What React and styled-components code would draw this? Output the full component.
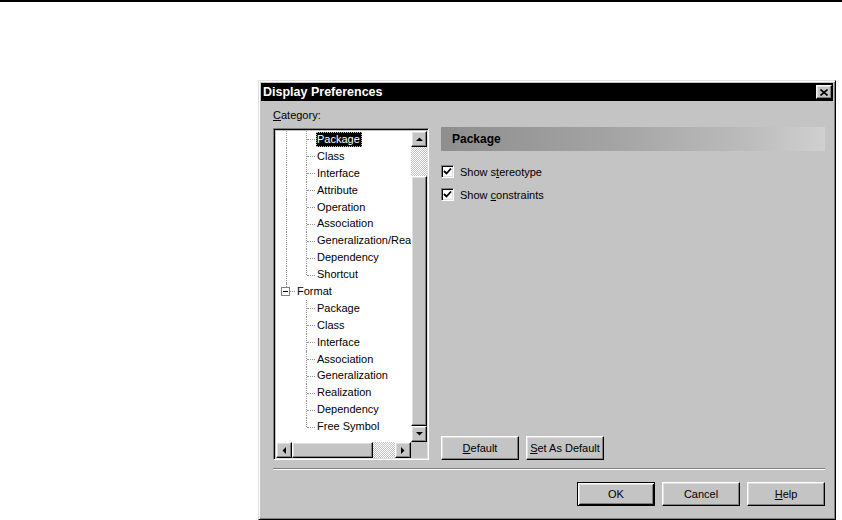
import React from 'react';
import styled, { css, createGlobalStyle } from 'styled-components';

const GlobalStyle = createGlobalStyle`
  html, body {
    margin: 0;
    padding: 0;
    background: #fff;
  }
  body {
    font-family: "Liberation Sans", Arial, sans-serif;
    font-size: 11px;
    color: #000;
  }
`;

const FACE = '#c4c4c4';

const raised = css`
  border: 1px solid;
  border-color: #fff #000 #000 #fff;
  box-shadow: inset -1px -1px #808080, inset 1px 1px #dfdfdf;
`;

const sunken = css`
  border: 1px solid;
  border-color: #808080 #fff #fff #808080;
  box-shadow: inset 1px 1px #000, inset -1px -1px #dfdfdf;
`;

const dither = css`
  background-color: #e4e4e4;
  background-image: repeating-conic-gradient(#c4c4c4 0 25%, #fff 0 50%);
  background-size: 2px 2px;
`;

const TopRule = styled.div`
  height: 2px;
  background: #000;
`;

const Dialog = styled.div`
  box-sizing: border-box;
  width: 578px;
  height: 440px;
  margin: 78px 0 0 258px;
  padding: 2px;
  background: ${FACE};
  border: 1px solid;
  border-color: #dfdfdf #000 #000 #dfdfdf;
  box-shadow: inset 1px 1px #fff, inset -1px -1px #808080;
  display: flex;
  flex-direction: column;
`;

const TitleBar = styled.div`
  height: 18px;
  background: #000;
  color: #fff;
  display: flex;
  align-items: center;
  justify-content: space-between;
  padding-left: 2px;
  font-size: 12.5px;
  font-weight: bold;
`;

const CloseButton = styled.button`
  box-sizing: border-box;
  width: 16px;
  height: 14px;
  margin-right: 1px;
  padding: 0;
  background: ${FACE};
  ${raised};
  display: flex;
  align-items: center;
  justify-content: center;
`;

const Body = styled.div`
  flex: 1;
  padding: 8px 8px 0 12px;
  display: flex;
  flex-direction: column;
`;

const MainRow = styled.div`
  display: flex;
  align-items: stretch;
`;

const LeftColumn = styled.div`
  width: 156px;
  display: flex;
  flex-direction: column;
`;

const FieldLabel = styled.div`
  line-height: 13px;
  height: 13px;
  margin-bottom: 6px;
`;

const TreeBox = styled.div`
  box-sizing: border-box;
  height: 332px;
  ${sunken};
  padding: 2px 1px 1px 2px;
  display: grid;
  grid-template-columns: 1fr 16px;
  grid-template-rows: 1fr 16px;
`;

const TreeContent = styled.div`
  background: #fff;
  overflow: hidden;
  white-space: nowrap;
`;

const TreeRow = styled.div`
  display: flex;
  align-items: center;
  height: 16.9px;
`;

const Gutter = styled.span`
  position: relative;
  flex: 0 0 20px;
  align-self: stretch;
  &::before {
    content: '';
    display: ${(p) => (p.$vert === 'none' ? 'none' : 'block')};
    position: absolute;
    left: 10px;
    top: 0;
    height: ${(p) => (p.$vert === 'top' ? '50%' : '100%')};
    border-left: 1px dotted #969696;
  }
  &::after {
    content: '';
    display: ${(p) => (p.$stub ? 'block' : 'none')};
    position: absolute;
    left: 11px;
    right: 1px;
    top: 50%;
    border-top: 1px dotted #969696;
  }
`;

const ExpandBox = styled.span`
  position: absolute;
  z-index: 1;
  left: 5px;
  top: 4px;
  width: 9px;
  height: 9px;
  box-sizing: border-box;
  border: 1px solid #808080;
  background: #fff;
  &::after {
    content: '';
    position: absolute;
    left: 1px;
    top: 3px;
    width: 5px;
    height: 1px;
    background: #000;
  }
`;

const NodeLabel = styled.span`
  padding: 0 2px 0 1px;
  height: 15px;
  line-height: 15px;
  ${(p) =>
    p.$selected &&
    css`
      background: #000;
      color: #fff;
      outline: 1px dotted #bbb;
      outline-offset: -1px;
    `}
`;

const VScroll = styled.div`
  display: flex;
  flex-direction: column;
  ${dither};
`;

const HScroll = styled.div`
  display: flex;
  ${dither};
`;

const ScrollButton = styled.div`
  box-sizing: border-box;
  flex: 0 0 16px;
  width: 16px;
  height: 16px;
  background: ${FACE};
  ${raised};
  display: flex;
  align-items: center;
  justify-content: center;
`;

const Thumb = styled.div`
  box-sizing: border-box;
  background: ${FACE};
  ${raised};
  ${(p) =>
    p.$horizontal
      ? css`
          width: ${p.$size}px;
          height: 16px;
        `
      : css`
          height: ${p.$size}px;
          width: 16px;
        `}
`;

const Track = styled.div`
  ${(p) => (p.$horizontal ? 'width' : 'height')}: ${(p) => p.$size}px;
  flex: ${(p) => (p.$grow ? 1 : 'none')};
`;

const Corner = styled.div`
  background: ${FACE};
`;

const RightColumn = styled.div`
  flex: 1;
  margin-left: 12px;
  padding-top: 18px;
  display: flex;
  flex-direction: column;
`;

const SectionHeader = styled.div`
  height: 24px;
  padding-left: 11px;
  display: flex;
  align-items: center;
  font-size: 12px;
  font-weight: bold;
  background: linear-gradient(90deg, #8e8e8e 0%, #a4a4a4 45%, #bcbcbc 80%, #d0d0d0 100%);
`;

const CheckList = styled.div`
  margin-top: 14px;
  display: flex;
  flex-direction: column;
  gap: 10px;
`;

const CheckRow = styled.label`
  display: flex;
  align-items: center;
  height: 13px;
  gap: 6px;
`;

const CheckBox = styled.span`
  box-sizing: border-box;
  width: 13px;
  height: 13px;
  background: #fff;
  ${sunken};
  display: flex;
  align-items: center;
  justify-content: center;
`;

const ButtonRow = styled.div`
  display: flex;
  gap: 7px;
  justify-content: ${(p) => (p.$end ? 'flex-end' : 'flex-start')};
  margin-top: ${(p) => (p.$end ? '12px' : 'auto')};
`;

const Button = styled.button`
  box-sizing: border-box;
  width: 78px;
  height: 24px;
  padding: 0;
  font-family: "Liberation Sans", Arial, sans-serif;
  font-size: 11px;
  color: #000;
  background: ${FACE};
  ${raised};
  ${(p) =>
    p.$primary &&
    css`
      border-color: #000;
      box-shadow: inset 1px 1px #fff, inset -1px -1px #000, inset 2px 2px #dfdfdf, inset -2px -2px #808080;
    `}
`;

const Separator = styled.div`
  margin-top: 8px;
  border-top: 1px solid #808080;
  border-bottom: 1px solid #fff;
`;

const Key = styled.span`
  text-decoration: underline;
`;

const Arrow = ({ dir }) => {
  const pts = {
    up: '0,4 7,4 3.5,0.5',
    down: '0,0 7,0 3.5,3.5',
    left: '4,0 4,7 0.5,3.5',
    right: '0,0 0,7 3.5,3.5',
  }[dir];
  const vertical = dir === 'up' || dir === 'down';
  return (
    <svg width={vertical ? 7 : 4} height={vertical ? 4 : 7} viewBox={vertical ? '0 0 7 4' : '0 0 4 7'}>
      <polygon points={pts} fill="#000" />
    </svg>
  );
};

const Check = () => (
  <svg width="9" height="9" viewBox="0 0 9 9">
    <path d="M1 4 L3.5 6.5 L8 1.5" stroke="#000" strokeWidth="1.8" fill="none" />
  </svg>
);

const treeRows = [
  { label: 'Package', g1: 'full', g2: 'full', selected: true },
  { label: 'Class', g1: 'full', g2: 'full' },
  { label: 'Interface', g1: 'full', g2: 'full' },
  { label: 'Attribute', g1: 'full', g2: 'full' },
  { label: 'Operation', g1: 'full', g2: 'full' },
  { label: 'Association', g1: 'full', g2: 'full' },
  { label: 'Generalization/Realization', g1: 'full', g2: 'full' },
  { label: 'Dependency', g1: 'full', g2: 'full' },
  { label: 'Shortcut', g1: 'full', g2: 'top' },
  { label: 'Format', node: true },
  { label: 'Package', g1: 'none', g2: 'full' },
  { label: 'Class', g1: 'none', g2: 'full' },
  { label: 'Interface', g1: 'none', g2: 'full' },
  { label: 'Association', g1: 'none', g2: 'full' },
  { label: 'Generalization', g1: 'none', g2: 'full' },
  { label: 'Realization', g1: 'none', g2: 'full' },
  { label: 'Dependency', g1: 'none', g2: 'full' },
  { label: 'Free Symbol', g1: 'none', g2: 'top' },
];

export default function App() {
  return (
    <>
      <GlobalStyle />
      <TopRule />
      <Dialog>
        <TitleBar>
          <span>Display Preferences</span>
          <CloseButton>
            <svg width="8" height="7" viewBox="0 0 8 7">
              <path d="M0.5 0.5 L7.5 6.5 M7.5 0.5 L0.5 6.5" stroke="#000" strokeWidth="1.6" />
            </svg>
          </CloseButton>
        </TitleBar>
        <Body>
          <MainRow>
            <LeftColumn>
              <FieldLabel>
                <Key>C</Key>ategory:
              </FieldLabel>
              <TreeBox>
                <TreeContent>
                  {treeRows.map((row, i) =>
                    row.node ? (
                      <TreeRow key={i}>
                        <Gutter $vert="top" $stub>
                          <ExpandBox />
                        </Gutter>
                        <NodeLabel>{row.label}</NodeLabel>
                      </TreeRow>
                    ) : (
                      <TreeRow key={i}>
                        <Gutter $vert={row.g1} />
                        <Gutter $vert={row.g2} $stub />
                        <NodeLabel $selected={row.selected}>{row.label}</NodeLabel>
                      </TreeRow>
                    )
                  )}
                </TreeContent>
                <VScroll>
                  <ScrollButton>
                    <Arrow dir="up" />
                  </ScrollButton>
                  <Track $size={29} />
                  <Thumb $size={250} />
                  <Track $grow />
                  <ScrollButton>
                    <Arrow dir="down" />
                  </ScrollButton>
                </VScroll>
                <HScroll>
                  <ScrollButton>
                    <Arrow dir="left" />
                  </ScrollButton>
                  <Thumb $horizontal $size={81} />
                  <Track $horizontal $grow />
                  <ScrollButton>
                    <Arrow dir="right" />
                  </ScrollButton>
                </HScroll>
                <Corner />
              </TreeBox>
            </LeftColumn>
            <RightColumn>
              <SectionHeader>Package</SectionHeader>
              <CheckList>
                <CheckRow>
                  <CheckBox>
                    <Check />
                  </CheckBox>
                  <span>
                    Show s<Key>t</Key>ereotype
                  </span>
                </CheckRow>
                <CheckRow>
                  <CheckBox>
                    <Check />
                  </CheckBox>
                  <span>
                    Show <Key>c</Key>onstraints
                  </span>
                </CheckRow>
              </CheckList>
              <ButtonRow>
                <Button>
                  <Key>D</Key>efault
                </Button>
                <Button>
                  <Key>S</Key>et As Default
                </Button>
              </ButtonRow>
            </RightColumn>
          </MainRow>
          <Separator />
          <ButtonRow $end>
            <Button $primary>OK</Button>
            <Button>Cancel</Button>
            <Button>
              <Key>H</Key>elp
            </Button>
          </ButtonRow>
        </Body>
      </Dialog>
    </>
  );
}
